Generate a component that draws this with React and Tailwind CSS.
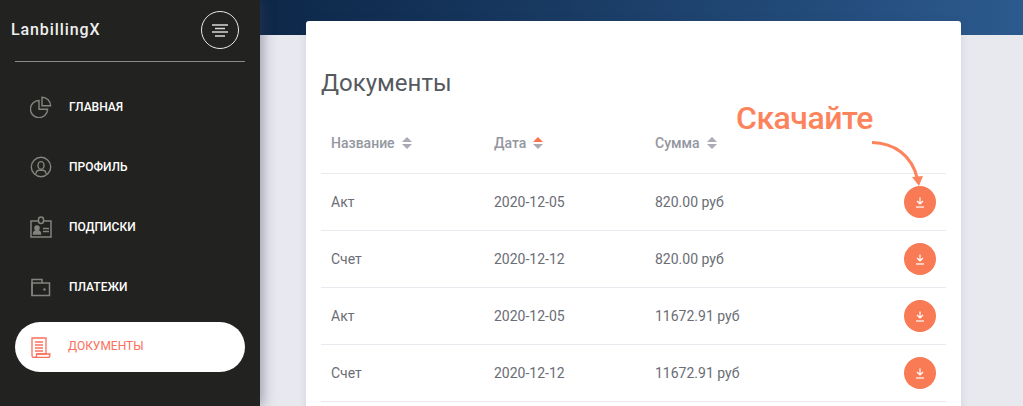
import React from "react";

const rows = [
    { name: "Акт", date: "2020-12-05", sum: "820.00 руб" },
    { name: "Счет", date: "2020-12-12", sum: "820.00 руб" },
    { name: "Акт", date: "2020-12-05", sum: "11672.91 руб" },
    { name: "Счет", date: "2020-12-12", sum: "11672.91 руб" },
];

function PieIcon() {
    return (
        <svg width="22" height="22" viewBox="0 0 22 22" fill="none" stroke="currentColor" strokeWidth="1.4">
            <path d="M9 4.500a8.600 8.600 0 1 0 8.600 8.800H9z" />
            <path d="M12 1.200v8.600h8.600A8.600 8.600 0 0 0 12 1.200z" />
        </svg>
    );
}

function ProfileIcon() {
    return (
        <svg width="22" height="22" viewBox="0 0 22 22" fill="none" stroke="currentColor" strokeWidth="1.4">
            <circle cx="11" cy="11" r="9.700" />
            <ellipse cx="11" cy="9.400" rx="3" ry="3.800" />
            <path d="M5.800 18c.4-2.400 1.600-3.800 3.300-3.800h3.800c1.700 0 2.900 1.400 3.300 3.800" />
        </svg>
    );
}

function BadgeIcon() {
    return (
        <svg width="22" height="22" viewBox="0 0 22 22" fill="none" stroke="currentColor" strokeWidth="1.500">
            <path d="M8.500 5H1v16h20V5h-7.500" />
            <rect x="8.500" y="1" width="5" height="6.500" rx="2.500" />
            <circle cx="7" cy="12" r="2" fill="currentColor" />
            <path d="M3.500 18c0-2.200 1.400-3.200 3.500-3.200s3.500 1 3.500 3.200z" fill="currentColor" />
            <path d="M13 12.500h6M13 15.500h6" />
        </svg>
    );
}

function WalletIcon() {
    return (
        <svg width="22" height="22" viewBox="0 0 22 22" fill="none" stroke="currentColor" strokeWidth="1.500">
            <path d="M2 19.500V3.500h10v3.500" />
            <path d="M2 7h17.500v12.500H2z" />
            <circle cx="14.500" cy="13.500" r="1.200" fill="currentColor" stroke="none" />
        </svg>
    );
}

function ScrollIcon() {
    return (
        <svg width="20" height="21" viewBox="0 0 20 21" fill="none" stroke="currentColor" strokeWidth="1.300">
            <path d="M1 1h14v16H5.500v2C5.500 20 4 20.500 3 20.500c-1.200 0-2-.8-2-2z" />
            <path d="M3 20.500h14.500c1 0 1.500-1 1.500-3.500H5.500" />
            <path d="M4 5h8M4 8h8M4 11h8M4 14h8" />
        </svg>
    );
}

function MenuItem({ icon, label, active }) {
    if (active) {
        return (
            <div className="mt-[5px] flex h-[50px] items-center rounded-full bg-white pl-[16px] text-[#fb6f5b]">
                <span className="w-[37px] shrink-0">{icon}</span>
                <span className="-mt-[3px] text-[12px] leading-none">{label}</span>
            </div>
        );
    }
    return (
        <div className="flex h-[60px] items-center pl-[15px]">
            <span className="w-[39px] shrink-0 text-[#83837f]">{icon}</span>
            <span className="text-[12px] font-medium leading-none text-white">{label}</span>
        </div>
    );
}

function SortArrows({ active }) {
    return (
        <span className="ml-[7px] flex flex-col gap-[2px]">
            <span className={`h-0 w-0 border-x-[5px] border-b-[5px] border-x-transparent ${active ? "border-b-[#f9734f]" : "border-b-[#a9abb3]"}`} />
            <span className="h-0 w-0 border-x-[5px] border-t-[5px] border-x-transparent border-t-[#a9abb3]" />
        </span>
    );
}

function DownloadButton() {
    return (
        <button className="flex h-[32px] w-[32px] items-center justify-center rounded-full bg-[#f97b55] text-white">
            <svg width="10" height="11" viewBox="0 0 10 11" fill="none" stroke="currentColor" strokeWidth="1.200">
                <path d="M5 0.500v6M2 4l3 3 3-3" />
                <path d="M1 10h8" />
            </svg>
        </button>
    );
}

export default function App() {
    return (
        <div className="flex h-[406px] w-[1023px] overflow-hidden bg-[#e8e9ef] font-['Roboto',sans-serif]">
            <aside className="z-10 flex w-[260px] shrink-0 flex-col bg-[#222220] px-[15px] shadow-[3px_0_12px_rgba(60,65,90,0.45)]">
                <div className="flex h-[62px] shrink-0 items-center justify-between border-b border-[#8a8a88] pb-[1px]">
                    <span className="-ml-[4px] text-[16px] font-medium tracking-[0.9px] text-[#eeeeee]">LanbillingX</span>
                    <button className="mr-[6px] flex h-[38px] w-[38px] items-center justify-center rounded-full border border-[#e8e8e8] text-[#d8d8d8]">
                        <svg width="16" height="13" viewBox="0 0 16 13" stroke="currentColor" strokeWidth="1.500">
                            <path d="M0 1h16M3 4.500h10M0 8h16M3 12h10" />
                        </svg>
                    </button>
                </div>
                <nav className="mt-[15px] flex flex-col">
                    <MenuItem icon={<PieIcon />} label="ГЛАВНАЯ" />
                    <MenuItem icon={<ProfileIcon />} label="ПРОФИЛЬ" />
                    <MenuItem icon={<BadgeIcon />} label="ПОДПИСКИ" />
                    <MenuItem icon={<WalletIcon />} label="ПЛАТЕЖИ" />
                    <MenuItem icon={<ScrollIcon />} label="ДОКУМЕНТЫ" active />
                </nav>
            </aside>

            <main className="relative flex-1">
                <div className="h-[35px] bg-gradient-to-r from-[#0d2748] to-[#2c5a8e]" />
                <div className="absolute left-[46px] top-[21px] h-[420px] w-[655px] rounded-[3px] bg-white px-[15px] shadow-[0_1px_8px_rgba(60,65,90,0.12)]">
                    <h1 className="mt-[46px] text-[24px] font-normal leading-[32px] text-[#555a60]">Документы</h1>
                    <div className="mt-[18px] flex h-[57px] items-center border-b border-[#e9eaf0] pb-[4px] text-[14px] font-medium text-[#94969f]">
                        <div className="flex w-[163px] items-center pl-[10px]">Название<SortArrows /></div>
                        <div className="flex w-[161px] items-center pl-[10px]">Дата<SortArrows active /></div>
                        <div className="flex items-center pl-[10px]">Сумма<SortArrows /></div>
                    </div>
                    {rows.map((row, i) => (
                        <div key={i} className="flex h-[57px] items-center border-b border-[#e9eaf0] text-[14px] text-[#6a6d75]">
                            <div className="w-[163px] pl-[10px]">{row.name}</div>
                            <div className="w-[161px] pl-[10px]">{row.date}</div>
                            <div className="flex-1 pl-[10px]">{row.sum}</div>
                            <div className="mr-[10px]"><DownloadButton /></div>
                        </div>
                    ))}
                </div>
                <span className="absolute left-[476px] top-[99px] text-[32px] font-medium leading-[38px] tracking-[-0.5px] text-[#fd835c]">Скачайте</span>
                <svg className="absolute left-[608px] top-[139px]" width="60" height="50" viewBox="0 0 60 50" fill="none">
                    <path d="M4 3.500C26 4 44 16 49.500 40" stroke="#fd835c" strokeWidth="3" />
                    <path d="M44 38l11-1-4 10z" fill="#fd835c" />
                </svg>
            </main>
        </div>
    );
}
